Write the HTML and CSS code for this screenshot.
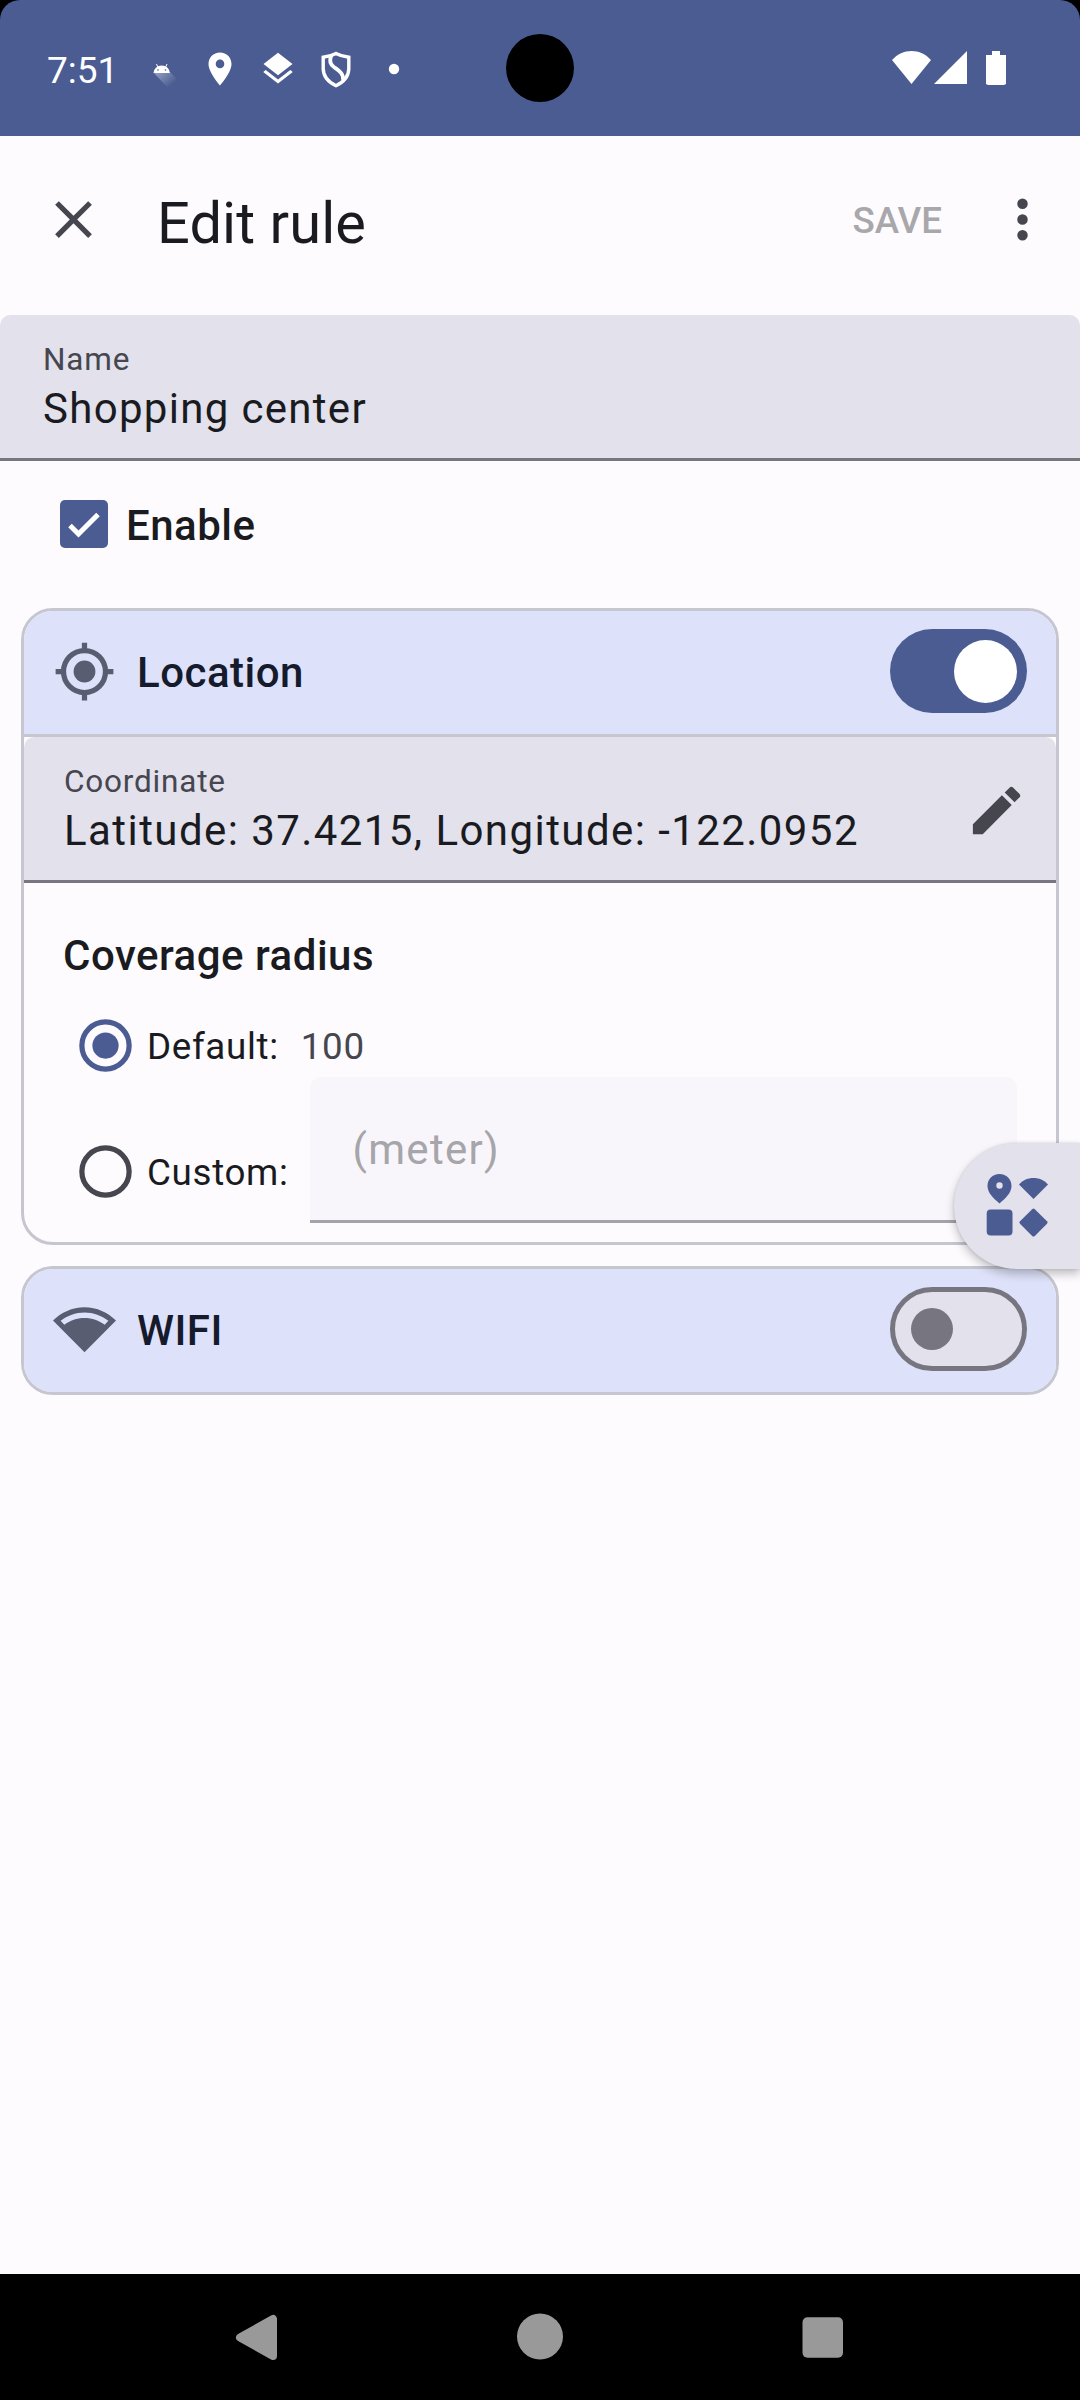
FILE: index.html
```html
<!DOCTYPE html>
<html lang="en">
<head>
<meta charset="utf-8">
<title>Edit rule</title>
<link rel="stylesheet" href="styles.css">
</head>
<body>
<div class="screen">
  <div class="status-bar-frame">
    <div class="status-bar">
      <span class="clock">7:51</span>
      <div class="notifications">
        <svg class="notif" viewBox="0 0 48 48">
          <defs><linearGradient id="shade" gradientUnits="userSpaceOnUse" x1="22" y1="27" x2="34" y2="41"><stop offset="0" stop-color="#fff" stop-opacity=".38"/><stop offset="1" stop-color="#fff" stop-opacity="0"/></linearGradient></defs>
          <path d="M16 29 32 28 41 37 30 44Z" fill="url(#shade)"/>
          <path d="M15.500 29a8.200 7.600 0 0 1 16.400 0Z" fill="#fff"/>
          <path d="M18.500 20 20 23.500M29 20 27.500 23.500" stroke="#fff" stroke-width="1"/>
          <circle cx="20" cy="26" r=".8" fill="#4a5c92"/><circle cx="27.500" cy="26" r=".8" fill="#4a5c92"/>
        </svg>
        <svg class="notif" viewBox="0 0 48 48"><path fill="#fff" fill-rule="evenodd" d="M24 8.500c-6.600 0-11.500 5-11.500 11.500 0 8.500 11.500 21.500 11.500 21.500S35.500 28.500 35.500 20c0-6.500-4.900-11.500-11.500-11.500Zm0 15.700a4.300 4.300 0 1 1 0-8.600 4.300 4.300 0 0 1 0 8.600Z"/></svg>
        <svg class="notif" viewBox="0 0 48 48"><path fill="#fff" d="m24 8.800 14.500 11.200L24 31.200 9.500 20ZM24 35.500l12.300-9.500 2.500 2L24 39.600 9.200 28l2.500-2Z"/></svg>
        <svg class="notif" viewBox="0 0 48 48" fill="none" stroke="#fff" stroke-width="3.400"><path d="M24 9.500c4 2.200 8.300 3.200 12.800 3.700V24.500c0 8-5 13.500-12.800 17.200C16.200 38 11.200 32.500 11.200 24.500V13.200c4.500-.5 8.800-1.500 12.800-3.700Z"/><path stroke-width="3.800" d="M19.500 11c-2.500 5.500-1.500 9.500 3 12.500 5 3.500 9 6 8.500 12.500"/></svg>
        <svg class="notif" viewBox="0 0 48 48"><circle cx="24" cy="25" r="5.200" fill="#fff"/></svg>
      </div>
      <svg class="system-icons" viewBox="0 0 116 36" fill="#fff">
        <path d="M0 10C5.500 4 12 1 19.500 1S33.500 4 39 10L19.500 34Z"/>
        <path d="M75 1v33H42Z"/>
        <path d="M100 1h8v4h6v29l-2 1H96l-2-1V5h6Z"/>
      </svg>
      <div class="camera"></div>
    </div>
  </div>

  <header class="toolbar">
    <svg class="icon" viewBox="0 0 24 24"><path fill="#46464f" d="M19 6.410 17.590 5 12 10.590 6.410 5 5 6.410 10.590 12 5 17.590 6.410 19 12 13.410 17.590 19 19 17.590 13.410 12Z"/></svg>
    <h1 class="title">Edit rule</h1>
    <span class="save">SAVE</span>
    <svg class="icon" viewBox="0 0 24 24"><path fill="#46464f" d="M12 8a2 2 0 1 0 0-4 2 2 0 0 0 0 4Zm0 2a2 2 0 1 0 0 4 2 2 0 0 0 0-4Zm0 6a2 2 0 1 0 0 4 2 2 0 0 0 0-4Z"/></svg>
  </header>

  <main>
    <div class="field name-field">
      <span class="field-label">Name</span>
      <span class="field-value">Shopping center</span>
    </div>

    <div class="enable-row">
      <svg class="checkbox" viewBox="0 0 48 48"><rect width="48" height="48" rx="5" fill="#4a5c92"/><path d="M10 25.500 18.500 34 38 14.500" fill="none" stroke="#fff" stroke-width="5"/></svg>
      <span class="subtitle enable-label">Enable</span>
    </div>

    <section class="card">
      <div class="card-header">
        <svg class="icon" viewBox="0 0 24 24" fill="#585d71"><circle cx="12" cy="12" r="4.150"/><circle cx="12" cy="12" r="8" fill="none" stroke="#585d71" stroke-width="2"/><path d="M11 1h2v3h-2zM11 20h2v3h-2zM1 11h3v2H1zM20 11h3v2h-3z"/></svg>
        <h2 class="subtitle card-title">Location</h2>
        <div class="switch switch-on"><div class="thumb"></div></div>
      </div>
      <div class="field coordinate-field">
        <div class="field-text">
          <span class="field-label">Coordinate</span>
          <span class="field-value coordinate-value">Latitude: 37.4215, Longitude: -122.0952</span>
        </div>
        <svg class="icon edit-icon" viewBox="0 0 24 24"><path fill="#46464f" d="M3 17.250V21h3.750L17.810 9.940l-3.750-3.750ZM20.710 7.040a1 1 0 0 0 0-1.410l-2.340-2.340a1 1 0 0 0-1.410 0l-1.830 1.830 3.750 3.750Z"/></svg>
      </div>
      <div class="card-body">
        <h3 class="subtitle radius-title">Coverage radius</h3>
        <div class="option option-default">
          <svg class="icon" viewBox="0 0 24 24"><circle cx="12" cy="12" r="9" fill="none" stroke="#4a5c92" stroke-width="2"/><circle cx="12" cy="12" r="5" fill="#4a5c92"/></svg>
          <span class="option-label">Default:</span>
          <span class="option-value">100</span>
        </div>
        <div class="custom-row">
          <div class="option option-custom">
            <svg class="icon" viewBox="0 0 24 24"><circle cx="12" cy="12" r="9" fill="none" stroke="#46464f" stroke-width="2"/></svg>
            <span class="option-label">Custom:</span>
          </div>
          <div class="meter-field">(meter)</div>
        </div>
      </div>
    </section>

    <section class="card card-collapsed">
      <div class="card-header">
        <svg class="icon" viewBox="0 0 24 24" fill="#585d71"><path fill-rule="evenodd" d="M12 3.500C7.300 3.500 3.100 5.500 0 8.600l12 12.100L24 8.600C20.900 5.500 16.700 3.500 12 3.500Zm7.700 6.700C17.500 8.500 14.900 7.600 12 7.600s-5.500.9-7.700 2.600L2.900 8.700C5.500 6.700 8.600 5.500 12 5.500s6.500 1.200 9.100 3.200Z"/></svg>
        <h2 class="subtitle card-title">WIFI</h2>
        <div class="switch switch-off"><div class="thumb"></div></div>
      </div>
    </section>
  </main>

  <div class="side-tab">
    <svg class="tab-icons" viewBox="0 0 64 64" fill="#4a5c92">
      <path fill-rule="evenodd" d="M13.500 0C6.500 0 1.500 5.200 1.500 12c0 7.200 6.500 12.500 12 17.500C19 24.500 25.500 19.200 25.500 12c0-6.800-5-12-12-12Zm0 14.700a3.200 3.200 0 1 1 0-6.400 3.200 3.200 0 0 1 0 6.400Z"/>
      <path d="M33 10.500c4-4.500 9-6.500 14.500-6.500S58 6 62 10.500L47.500 25Z"/>
      <rect x=".7" y="35.500" width="25.800" height="26" rx="4"/>
      <path d="M46.200 35.200q1.300-1.200 2.600 0L61 47.200q1.200 1.300 0 2.600L48.800 62q-1.300 1.200-2.600 0L34 49.800q-1.200-1.300 0-2.600Z"/>
    </svg>
  </div>

  <nav class="nav-bar">
    <svg class="nav-icon" viewBox="0 0 48 48"><path d="M40 6v37L7 24.500Z" fill="#999" stroke="#999" stroke-width="8" stroke-linejoin="round"/></svg>
    <svg class="nav-icon" viewBox="0 0 48 48"><circle cx="24" cy="23.500" r="23" fill="#999"/></svg>
    <svg class="nav-icon" viewBox="0 0 48 48"><rect x="3.500" y="4.200" width="40.500" height="40.500" rx="5" fill="#999"/></svg>
  </nav>
</div>
</body>
</html>
```
FILE: styles.css
```css
* { box-sizing: border-box; }

body {
  margin: 0;
  font-family: Roboto, "Liberation Sans", sans-serif;
  color: #1a1b21;
}

h1, h2, h3 { margin: 0; }
svg { display: block; flex: none; }

.screen {
  position: relative;
  display: flex;
  flex-direction: column;
  width: 1080px;
  height: 2400px;
  overflow: hidden;
  background: #fefbff;
}

.icon { width: 63px; height: 63px; }

/* Status bar */
.status-bar-frame { background: #000; }
.status-bar {
  position: relative;
  display: flex;
  align-items: center;
  height: 136px;
  padding: 0 72px 0 47px;
  border-radius: 20px 20px 0 0;
  background: #4a5c92;
  color: #fff;
}
.clock { width: 69px; padding-top: 5px; font-size: 37px; line-height: 44px; white-space: nowrap; }
.notifications { display: flex; gap: 10px; margin-left: 22px; }
.notif { width: 48px; height: 48px; }
.system-icons { width: 116px; height: 36px; margin-left: auto; }
.camera {
  position: absolute;
  left: 506px;
  top: 34px;
  width: 68px;
  height: 68px;
  border-radius: 50%;
  background: #000;
}

/* Toolbar */
.toolbar {
  display: flex;
  align-items: center;
  height: 167px;
  margin-bottom: 12px;
  padding: 0 26px 0 42px;
}
.title {
  margin-left: 52px;
  padding-top: 7px;
  font-size: 57.75px;
  font-weight: 400;
  letter-spacing: .1px;
  line-height: 74px;
}
.save {
  margin: 2px 49px 0 auto;
  color: #a8a8ab;
  font-size: 36.75px;
  font-weight: 500;
}

/* Filled text fields */
.field {
  display: flex;
  height: 146px;
  border-bottom: 3px solid #777680;
  border-radius: 10.5px 10.5px 0 0;
  background: linear-gradient(#e2e1ec, #e2e1ec);
}
/* The underline keeps square ends across the rounded fill */
.name-field { flex-direction: column; padding: 25px 43px 0; }
.coordinate-field { padding: 25px 28px 0 40px; }
.field-text { display: flex; flex: 1; flex-direction: column; }
.field-label {
  color: #46464f;
  font-size: 31.5px;
  letter-spacing: .8px;
  line-height: 39px;
}
.field-value { font-size: 42px; letter-spacing: 1.31px; line-height: 60px; white-space: nowrap; }
.coordinate-value { letter-spacing: 1.43px; }
.edit-icon { margin-top: 17px; }

.subtitle { font-size: 42px; font-weight: 500; letter-spacing: .5px; line-height: 60px; }

.enable-row {
  display: flex;
  align-items: center;
  height: 126px;
  margin-bottom: 21px;
  padding-left: 60px;
}
.checkbox { width: 48px; height: 48px; }
.enable-label { margin-left: 18px; padding-top: 3px; }

/* Cards */
.card {
  margin: 0 21px 21px;
  overflow: hidden;
  border: 3px solid #c6c6d0;
  border-radius: 32px;
}
.card-header {
  display: flex;
  align-items: center;
  height: 126px;
  padding: 0 29px 3px;
  border-bottom: 3px solid #c6c6d0;
  background: #dde1f9;
}
.card-collapsed .card-header { height: 123px; border-bottom: 0; }
.card-title { margin-left: 21px; padding-top: 3px; color: #151b2c; }

.switch {
  display: flex;
  align-items: center;
  width: 137px;
  height: 84px;
  margin-left: auto;
  border-radius: 42px;
}
.switch-on { justify-content: flex-end; padding-right: 10.5px; background: #4a5c92; }
.switch-on .thumb { width: 63px; height: 63px; border-radius: 50%; background: #fff; }
.switch-off { padding-left: 16px; border: 5.25px solid #777680; background: #e2e1ec; }
.switch-off .thumb { width: 42px; height: 42px; border-radius: 50%; background: #777680; }

/* Coverage radius */
.card-body { padding: 43px 39px 19px; }
.radius-title { height: 60px; }
.option { display: flex; align-items: center; height: 63px; font-size: 36.75px; letter-spacing: .66px; }
.option-default { height: 91px; padding: 27px 0 0 10.5px; }
.option-label { margin-left: 10.5px; padding-top: 3px; line-height: 52px; }
.option-value { margin-left: 22px; padding-top: 3px; color: #46464f; line-height: 52px; }
.custom-row { display: flex; }
.option-custom { width: 247px; margin-top: 63px; padding-left: 10.5px; }
.meter-field {
  flex: 1;
  height: 146px;
  padding: 41px 42.5px 0;
  border-bottom: 3px solid #a4a2aa;
  border-radius: 10.5px 10.5px 0 0;
  background: #f8f6fb;
  color: #a6a5a9;
  font-size: 42px;
  letter-spacing: 1.31px;
  line-height: 63px;
}

/* Tab docked to the right edge, above the cards */
.side-tab {
  position: absolute;
  top: 1143px;
  right: 0;
  display: flex;
  align-items: center;
  width: 126px;
  height: 126px;
  padding-left: 32px;
  border-radius: 63px 0 0 63px;
  background: #e2e1ec;
  box-shadow: 0 5px 10px rgba(0, 0, 0, .24), 0 0 3px rgba(0, 0, 0, .12);
}
.tab-icons { width: 64px; height: 64px; }

/* Navigation bar */
.nav-bar {
  display: flex;
  align-items: center;
  justify-content: center;
  gap: 235px;
  height: 126px;
  margin-top: auto;
  background: #000;
}
.nav-icon { width: 48px; height: 48px; }
```
